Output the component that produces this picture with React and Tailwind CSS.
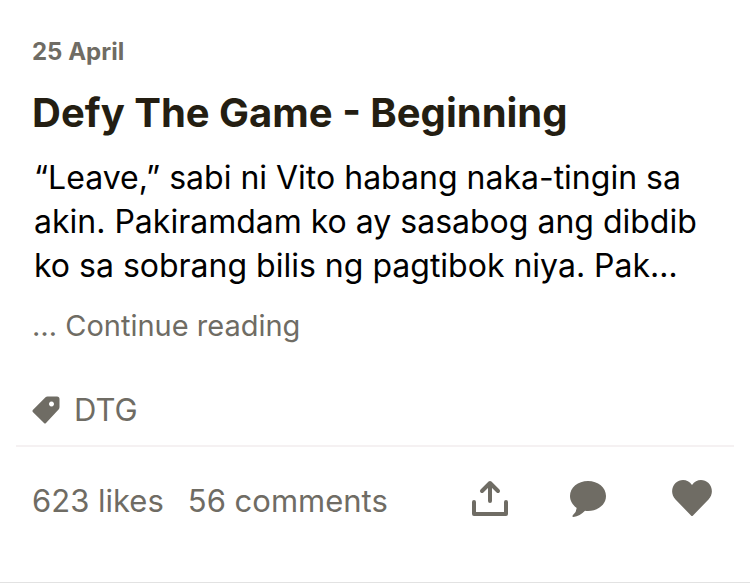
const post = {
  date: '25 April',
  title: 'Defy The Game - Beginning',
  excerpt:
    '“Leave,” sabi ni Vito habang naka-tingin sa akin. Pakiramdam ko ay sasabog ang dibdib ko sa sobrang bilis ng pagtibok niya. Pak…',
  tag: 'DTG',
  likes: 623,
  comments: 56,
};

function TagIcon() {
  return (
    <svg viewBox="0 0 28 28" className="size-7" fill="currentColor" aria-hidden="true">
      <path
        fillRule="evenodd"
        d="M13.5 1.200 Q14.300 0.500 15.500 0.500 H25 Q27.500 0.500 27.500 3 V11 Q27.500 12.300 26.800 13.200 L14 27 Q13 28 12 27 L0.800 16 Q0 15 0.800 14 Z M19.500 5.500 a2.500 2.500 0 1 0 0.010 0 Z"
      />
    </svg>
  );
}

function ShareIcon() {
  return (
    <svg
      viewBox="0 0 40 40"
      className="size-10"
      fill="none"
      stroke="currentColor"
      strokeWidth="4"
      strokeLinecap="round"
      strokeLinejoin="round"
      aria-hidden="true"
    >
      <path d="M20 22 V4 M12 12 L20 4 L28 12" />
      <path d="M4 23 V35 H36 V23" />
    </svg>
  );
}

function CommentIcon() {
  return (
    <svg viewBox="0 0 40 40" className="size-10" fill="currentColor" aria-hidden="true">
      <path d="M20 2 C30 2 38 8.500 38 17 C38 25.500 30 32 20 32 Q18.500 32 17 31.800 Q12 37 5.500 38 Q3.500 38 5 36 Q9 32.500 8.500 28.800 C4.500 25.800 2 21.800 2 17 C2 8.500 10 2 20 2 Z" />
    </svg>
  );
}

function HeartIcon() {
  return (
    <svg viewBox="0 0 40 40" className="size-10" fill="currentColor" aria-hidden="true">
      <path d="M19 36.500 L3.500 20.500 C-1.500 15 -0.500 8 3.500 4 C8.500 -0.500 16 0 20 6 C24 0 31.500 -0.500 36.500 4 C40.500 8 41.500 15 36.500 20.500 L21 36.500 Q20 37.500 19 36.500 Z" />
    </svg>
  );
}

export default function App() {
  return (
    <article className="border-b border-[#e2e2e2] bg-white pt-8 pb-[59px] font-['Inter','Liberation_Sans',sans-serif] text-[#6f6c64]">
      <div className="px-8">
        <time dateTime="04-25" className="block text-2xl leading-10 font-bold">
          {post.date}
        </time>
        <h1 className="mt-4 text-[40px] leading-[50px] font-bold text-[#241e12]">{post.title}</h1>
        <p className="mt-[18px] pl-0.5 text-[32px] leading-[44px] text-black">{post.excerpt}</p>
        <a href="#continue" className="mt-[18px] block text-[29px] leading-10">
          … Continue reading
        </a>
        <a href="#dtg" className="mt-11 flex items-center gap-3.5 text-[31px] leading-10">
          <TagIcon />
          {post.tag}
        </a>
      </div>

      <hr className="mx-4 mt-[15px] border-t-2 border-[#f5f1f2]" />

      <footer className="mt-8 flex items-start pr-[38px] pl-8">
        <div className="flex gap-6 text-[31px] leading-[44px]">
          <span>{post.likes} likes</span>
          <span>{post.comments} comments</span>
        </div>
        <div className="ml-auto flex gap-[58px]">
          <button type="button" aria-label="Share">
            <ShareIcon />
          </button>
          <button type="button" aria-label="Comment">
            <CommentIcon />
          </button>
          <button type="button" aria-label="Like" className="ml-1.5">
            <HeartIcon />
          </button>
        </div>
      </footer>
    </article>
  );
}
